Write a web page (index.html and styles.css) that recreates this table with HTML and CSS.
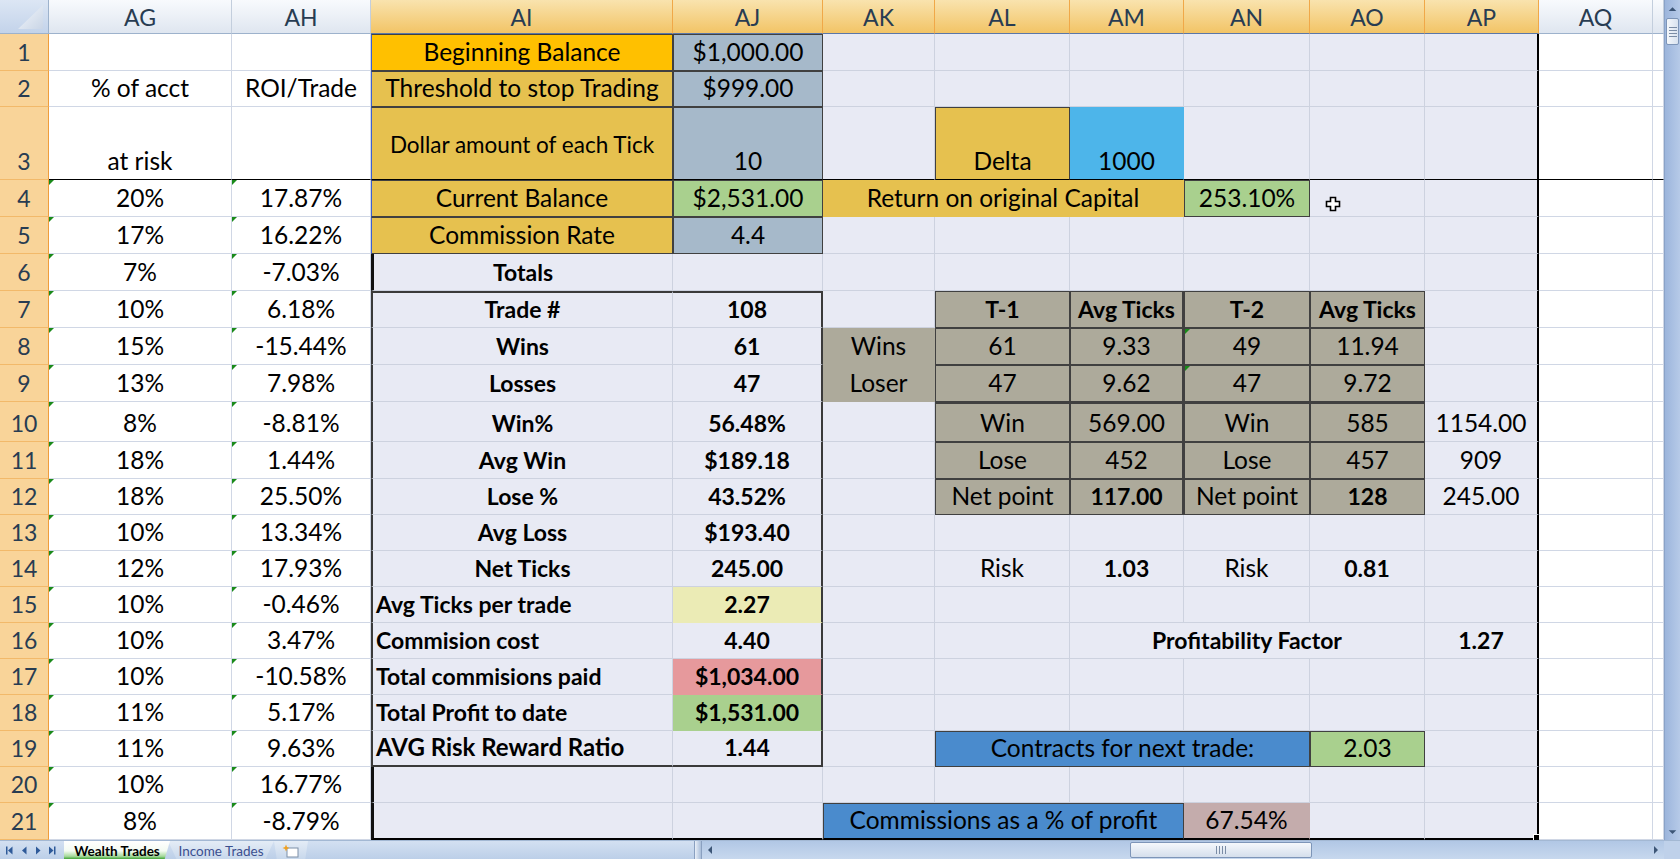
FILE: index.html
```html
<!DOCTYPE html>
<html lang="en">
<head>
<meta charset="utf-8">
<title>Wealth Trades</title>
<link rel="stylesheet" href="styles.css">
</head>
<body>
<div class="app">
  <div class="main">
    <div class="sheet">
      <!-- header row -->
      <div class="corner"><svg width="48" height="33" viewBox="0 0 48 33"><defs><linearGradient id="tg" x1="0" y1="0" x2="1" y2="1"><stop offset="0" stop-color="#f4f7fb"/><stop offset="1" stop-color="#c9d5e6"/></linearGradient></defs><polygon points="43,5 43,29 18,29" fill="url(#tg)"/></svg></div>
      <div class="h">AG</div>
      <div class="h">AH</div>
      <div class="h hs">AI</div>
      <div class="h hs">AJ</div>
      <div class="h hs">AK</div>
      <div class="h hs">AL</div>
      <div class="h hs">AM</div>
      <div class="h hs">AN</div>
      <div class="h hs">AO</div>
      <div class="h hs">AP</div>
      <div class="h">AQ</div>
      <div class="h"></div>

      <!-- row 1 -->
      <div class="rh">1</div>
      <div class="c"></div>
      <div class="c"></div>
      <div class="c s gold1 bx bl">Beginning Balance</div>
      <div class="c s bgy bx">$1,000.00</div>
      <div class="c s"></div>
      <div class="c s"></div>
      <div class="c s"></div>
      <div class="c s"></div>
      <div class="c s"></div>
      <div class="c s ap"></div>
      <div class="c"></div>
      <div class="c"></div>

      <!-- row 2 -->
      <div class="rh">2</div>
      <div class="c">% of acct</div>
      <div class="c">ROI/Trade</div>
      <div class="c s gold bx bl">Threshold to stop Trading</div>
      <div class="c s bgy bx">$999.00</div>
      <div class="c s"></div>
      <div class="c s"></div>
      <div class="c s"></div>
      <div class="c s"></div>
      <div class="c s"></div>
      <div class="c s ap"></div>
      <div class="c"></div>
      <div class="c"></div>

      <!-- row 3 -->
      <div class="rh">3</div>
      <div class="c fz">at risk</div>
      <div class="c fz"></div>
      <div class="c s gold bx bl fz mid">Dollar amount of each Tick</div>
      <div class="c s bgy bx fz">10</div>
      <div class="c s fz"></div>
      <div class="c s gold bx fz">Delta</div>
      <div class="c s sky fz">1000</div>
      <div class="c s fz"></div>
      <div class="c s fz"></div>
      <div class="c s ap fz"></div>
      <div class="c fz"></div>
      <div class="c fz"></div>

      <!-- row 4 -->
      <div class="rh">4</div>
      <div class="c err">20%</div>
      <div class="c err">17.87%</div>
      <div class="c s gold bx bl">Current Balance</div>
      <div class="c s grn bx">$2,531.00</div>
      <div class="c s gold sp3">Return on original Capital</div>
      <div class="c s grn bx">253.10%</div>
      <div class="c s cur"><svg width="16" height="16" viewBox="0 0 16 16"><path d="M5.5 1.5h5v4h4v5h-4v4h-5v-4h-4v-5h4z" fill="#fff" stroke="#000" stroke-width="1.6" stroke-linejoin="miter"/></svg></div>
      <div class="c s ap"></div>
      <div class="c"></div>
      <div class="c"></div>

      <!-- row 5 -->
      <div class="rh">5</div>
      <div class="c err">17%</div>
      <div class="c err">16.22%</div>
      <div class="c s gold bx bl">Commission Rate</div>
      <div class="c s bgy bx">4.4</div>
      <div class="c s"></div>
      <div class="c s"></div>
      <div class="c s"></div>
      <div class="c s"></div>
      <div class="c s"></div>
      <div class="c s ap"></div>
      <div class="c"></div>
      <div class="c"></div>

      <!-- row 6 -->
      <div class="rh">6</div>
      <div class="c err">7%</div>
      <div class="c err">-7.03%</div>
      <div class="c s b thk">Totals</div>
      <div class="c s"></div>
      <div class="c s"></div>
      <div class="c s"></div>
      <div class="c s"></div>
      <div class="c s"></div>
      <div class="c s"></div>
      <div class="c s ap"></div>
      <div class="c"></div>
      <div class="c"></div>

      <!-- row 7 -->
      <div class="rh">7</div>
      <div class="c err">10%</div>
      <div class="c err">6.18%</div>
      <div class="c s b tl tt">Trade #</div>
      <div class="c s b tr tt">108</div>
      <div class="c s"></div>
      <div class="c s tan bx b">T-1</div>
      <div class="c s tan bx b gr">Avg Ticks</div>
      <div class="c s tan bx b">T-2</div>
      <div class="c s tan bx b">Avg Ticks</div>
      <div class="c s ap"></div>
      <div class="c"></div>
      <div class="c"></div>

      <!-- row 8 -->
      <div class="rh">8</div>
      <div class="c err">15%</div>
      <div class="c err">-15.44%</div>
      <div class="c s b tl">Wins</div>
      <div class="c s b tr">61</div>
      <div class="c s tan">Wins</div>
      <div class="c s tan bx">61</div>
      <div class="c s tan bx gr">9.33</div>
      <div class="c s tan bx err">49</div>
      <div class="c s tan bx">11.94</div>
      <div class="c s ap"></div>
      <div class="c"></div>
      <div class="c"></div>

      <!-- row 9 -->
      <div class="rh">9</div>
      <div class="c err">13%</div>
      <div class="c err">7.98%</div>
      <div class="c s b tl">Losses</div>
      <div class="c s b tr">47</div>
      <div class="c s tan">Loser</div>
      <div class="c s tan bx">47</div>
      <div class="c s tan bx gr">9.62</div>
      <div class="c s tan bx err">47</div>
      <div class="c s tan bx">9.72</div>
      <div class="c s ap"></div>
      <div class="c"></div>
      <div class="c"></div>

      <!-- row 10 -->
      <div class="rh">10</div>
      <div class="c err">8%</div>
      <div class="c err">-8.81%</div>
      <div class="c s b tl">Win%</div>
      <div class="c s b tr">56.48%</div>
      <div class="c s"></div>
      <div class="c s tan bx gt">Win</div>
      <div class="c s tan bx gt gr">569.00</div>
      <div class="c s tan bx gt">Win</div>
      <div class="c s tan bx gt">585</div>
      <div class="c s ap">1154.00</div>
      <div class="c"></div>
      <div class="c"></div>

      <!-- row 11 -->
      <div class="rh">11</div>
      <div class="c err">18%</div>
      <div class="c err">1.44%</div>
      <div class="c s b tl">Avg Win</div>
      <div class="c s b tr">$189.18</div>
      <div class="c s"></div>
      <div class="c s tan bx">Lose</div>
      <div class="c s tan bx gr">452</div>
      <div class="c s tan bx">Lose</div>
      <div class="c s tan bx">457</div>
      <div class="c s ap">909</div>
      <div class="c"></div>
      <div class="c"></div>

      <!-- row 12 -->
      <div class="rh">12</div>
      <div class="c err">18%</div>
      <div class="c err">25.50%</div>
      <div class="c s b tl">Lose %</div>
      <div class="c s b tr">43.52%</div>
      <div class="c s"></div>
      <div class="c s tan bx">Net point</div>
      <div class="c s tan bx gr b">117.00</div>
      <div class="c s tan bx">Net point</div>
      <div class="c s tan bx b">128</div>
      <div class="c s ap">245.00</div>
      <div class="c"></div>
      <div class="c"></div>

      <!-- row 13 -->
      <div class="rh">13</div>
      <div class="c err">10%</div>
      <div class="c err">13.34%</div>
      <div class="c s b tl">Avg Loss</div>
      <div class="c s b tr">$193.40</div>
      <div class="c s"></div>
      <div class="c s"></div>
      <div class="c s"></div>
      <div class="c s"></div>
      <div class="c s"></div>
      <div class="c s ap"></div>
      <div class="c"></div>
      <div class="c"></div>

      <!-- row 14 -->
      <div class="rh">14</div>
      <div class="c err">12%</div>
      <div class="c err">17.93%</div>
      <div class="c s b tl">Net Ticks</div>
      <div class="c s b tr">245.00</div>
      <div class="c s"></div>
      <div class="c s">Risk</div>
      <div class="c s b">1.03</div>
      <div class="c s">Risk</div>
      <div class="c s b">0.81</div>
      <div class="c s ap"></div>
      <div class="c"></div>
      <div class="c"></div>

      <!-- row 15 -->
      <div class="rh">15</div>
      <div class="c err">10%</div>
      <div class="c err">-0.46%</div>
      <div class="c s b l tl">Avg Ticks per trade</div>
      <div class="c s yel b tr">2.27</div>
      <div class="c s"></div>
      <div class="c s"></div>
      <div class="c s"></div>
      <div class="c s"></div>
      <div class="c s"></div>
      <div class="c s ap"></div>
      <div class="c"></div>
      <div class="c"></div>

      <!-- row 16 -->
      <div class="rh">16</div>
      <div class="c err">10%</div>
      <div class="c err">3.47%</div>
      <div class="c s b l tl">Commision cost</div>
      <div class="c s b tr">4.40</div>
      <div class="c s"></div>
      <div class="c s"></div>
      <div class="c s b sp3">Profitability Factor</div>
      <div class="c s b ap">1.27</div>
      <div class="c"></div>
      <div class="c"></div>

      <!-- row 17 -->
      <div class="rh">17</div>
      <div class="c err">10%</div>
      <div class="c err">-10.58%</div>
      <div class="c s b l tl">Total commisions paid</div>
      <div class="c s pink b tr">$1,034.00</div>
      <div class="c s"></div>
      <div class="c s"></div>
      <div class="c s"></div>
      <div class="c s"></div>
      <div class="c s"></div>
      <div class="c s ap"></div>
      <div class="c"></div>
      <div class="c"></div>

      <!-- row 18 -->
      <div class="rh">18</div>
      <div class="c err">11%</div>
      <div class="c err">5.17%</div>
      <div class="c s b l tl">Total Profit to date</div>
      <div class="c s grn b tr">$1,531.00</div>
      <div class="c s"></div>
      <div class="c s"></div>
      <div class="c s"></div>
      <div class="c s"></div>
      <div class="c s"></div>
      <div class="c s ap"></div>
      <div class="c"></div>
      <div class="c"></div>

      <!-- row 19 -->
      <div class="rh">19</div>
      <div class="c err">11%</div>
      <div class="c err">9.63%</div>
      <div class="c s b l tl tb big">AVG Risk Reward Ratio</div>
      <div class="c s b tr tb">1.44</div>
      <div class="c s"></div>
      <div class="c s blue bx sp3">Contracts for next trade:</div>
      <div class="c s grn bx">2.03</div>
      <div class="c s ap"></div>
      <div class="c"></div>
      <div class="c"></div>

      <!-- row 20 -->
      <div class="rh">20</div>
      <div class="c err">10%</div>
      <div class="c err">16.77%</div>
      <div class="c s thk"></div>
      <div class="c s"></div>
      <div class="c s"></div>
      <div class="c s"></div>
      <div class="c s"></div>
      <div class="c s"></div>
      <div class="c s"></div>
      <div class="c s ap"></div>
      <div class="c"></div>
      <div class="c"></div>

      <!-- row 21 -->
      <div class="rh">21</div>
      <div class="c err">8%</div>
      <div class="c err">-8.79%</div>
      <div class="c s thk last"></div>
      <div class="c s last"></div>
      <div class="c s blue bx sp3 last">Commissions as a % of profit</div>
      <div class="c s rose last">67.54%</div>
      <div class="c s last"></div>
      <div class="c s ap last handle"></div>
      <div class="c"></div>
      <div class="c"></div>
    </div>

    <div class="vscroll">
      <div class="varrow"><svg width="16" height="16" viewBox="0 0 16 16"><path d="M4 10l4-4 4 4z" fill="#3d5677"/></svg></div>
      <div class="vthumb"><span></span><span></span><span></span><span></span></div>
      <div class="vtrack"></div>
      <div class="varrow"><svg width="16" height="16" viewBox="0 0 16 16"><path d="M4 6l4 4 4-4z" fill="#3d5677"/></svg></div>
    </div>
  </div>

  <div class="tabbar">
    <div class="nav">
      <svg width="60" height="19" viewBox="0 0 60 19">
        <rect x="6" y="5.5" width="1.5" height="8" fill="#2e5a99"/>
        <path d="M12.5 5.5v8l-4.5-4z" fill="#2e5a99"/>
        <path d="M26.5 5.5v8l-4.5-4z" fill="#2e5a99"/>
        <path d="M36 5.5v8l4.5-4z" fill="#2e5a99"/>
        <path d="M49 5.5v8l4.5-4z" fill="#2e5a99"/>
        <rect x="54" y="5.5" width="1.5" height="8" fill="#2e5a99"/>
      </svg>
    </div>
    <div class="tab active">Wealth Trades</div>
    <div class="tab">Income Trades</div>
    <div class="tab newtab"><svg width="18" height="14" viewBox="0 0 18 14"><rect x="5" y="4" width="11" height="9" fill="#fff" stroke="#7d8fa8"/><path d="M4 0.5l1 2.5 2.5 1-2.5 1-1 2.5-1-2.5-2.5-1 2.5-1z" fill="#f0a020"/></svg></div>
    <div class="tabfill"></div>
    <div class="split"></div>
    <div class="hscroll">
      <div class="harrow"><svg width="16" height="16" viewBox="0 0 16 16"><path d="M10 4l-4 4 4 4z" fill="#3d5677"/></svg></div>
      <div class="htrack"><div class="hthumb"><span></span><span></span><span></span><span></span></div></div>
      <div class="harrow"><svg width="16" height="16" viewBox="0 0 16 16"><path d="M6 4l4 4-4 4z" fill="#3d5677"/></svg></div>
    </div>
    <div class="sizebox"></div>
  </div>
</div>
</body>
</html>
```

FILE: styles.css
```css
* { box-sizing: border-box; }
html, body { margin: 0; padding: 0; }
body {
  width: 1680px;
  height: 859px;
  overflow: hidden;
  background: #fff;
  font-family: Lato, "Liberation Sans", sans-serif;
}

.app { display: flex; flex-direction: column; width: 1680px; height: 859px; }
.main { display: flex; height: 840px; }

.sheet {
  display: grid;
  width: 1664px;
  height: 840px;
  overflow: hidden;
  grid-template-columns: 49px 183px 139px 302px 150px 112px 135px 114px 126px 115px 114px 114px 11px;
  grid-template-rows: 34px 37px 36px 73px repeat(6, 37px) 40px 37px repeat(9, 36px) 37px;
}

/* headers */
.corner {
  background: linear-gradient(#dce6f4, #c3d3ea);
  border-right: 1px solid #9db2cc;
  border-bottom: 1px solid #9db2cc;
}
.corner svg { display: block; }

.h {
  display: flex;
  align-items: flex-end;
  justify-content: center;
  padding-bottom: 2px;
  font-size: 23px;
  line-height: 27px;
  color: #283c52;
  background: linear-gradient(#f8fafd, #dfe6f0);
  border-right: 1px solid #c3cedd;
  border-bottom: 1px solid #9db2cc;
}
.hs {
  background: linear-gradient(#f9e3ae, #f2c466);
  border-right-color: #f0a848;
  border-bottom-color: #5a77a8;
}

.rh {
  display: flex;
  align-items: flex-end;
  justify-content: center;
  padding-bottom: 4px;
  font-size: 23px;
  line-height: 27px;
  color: #283c52;
  background: #f9d499;
  border-right: 1px solid #ef9d3c;
  border-bottom: 1px solid #f2b96a;
}

/* cells */
.c {
  position: relative;
  display: flex;
  align-items: flex-end;
  justify-content: center;
  padding: 0 2px 4px;
  font-size: 24.5px;
  line-height: 28px;
  color: #000;
  white-space: nowrap;
  background: #fff;
  border-right: 1px solid #d0d7e5;
  border-bottom: 1px solid #d0d7e5;
}
.s { background: #e8eaf4; border-color: #cdd2df; }

.b { font-weight: 700; font-size: 23px; }
.l { justify-content: flex-start; padding-left: 3px; }
.mid { align-items: center; padding-bottom: 0; padding-top: 3px; font-size: 22.5px; }
.sp3 { grid-column: span 3; }
.big { font-size: 24px; }

/* fills */
.gold1 { background: #ffc000; }
.gold { background: #e6c14f; border-color: #e6c14f; }
.bgy { background: #a6b9ca; }
.grn { background: #a9d08e; border-color: #a9d08e; }
.sky { background: #4db5ea; border-color: #4db5ea; }
.tan { background: #adaa9b; border-color: #adaa9b; }
.yel { background: #ebebb5; border-color: #ebebb5; }
.pink { background: #e6999c; border-color: #e6999c; }
.blue { background: #4a8bcd; border-color: #4a8bcd; }
.rose { background: #c4acac; border-color: #c4acac; }

/* borders */
.bx { border: 1px solid #404040; }
.gr { border-right: 2px solid #404040; }
.gt { border-top: 2px solid #404040; }
.tl { border-left: 2px solid #3a3a3a; }
.tr { border-right: 2px solid #3a3a3a; }
.tt { border-top: 2px solid #3a3a3a; }
.tb { border-bottom: 2px solid #3a3a3a; }
.bl { border-left: 1px solid #3c5fd0; }
.thk { border-left: 3px solid #111; }
.ap { border-right: 2px solid #000; }
.fz { border-bottom: 1px solid #000; }
.last { border-bottom: 2px solid #000; }

.err::before {
  content: "";
  position: absolute;
  top: 0;
  left: 0;
  border-top: 5px solid #1a8a1a;
  border-right: 5px solid transparent;
}

.handle::after {
  content: "";
  position: absolute;
  right: -4px;
  bottom: -4px;
  width: 6px;
  height: 6px;
  background: #000;
  border: 1px solid #fff;
}

.cur { justify-content: flex-start; padding-left: 15px; padding-bottom: 4px; }
.cur svg { display: block; }

/* vertical scrollbar */
.vscroll {
  width: 16px;
  height: 840px;
  display: flex;
  flex-direction: column;
  background: linear-gradient(to right, #9cb5dc, #b6cae8);
  border-left: 1px solid #8aa3c8;
}
.varrow { height: 17px; display: flex; align-items: center; justify-content: center; }
.varrow svg { display: block; }
.vthumb {
  height: 27px;
  margin: 1px 1px 0;
  border: 1px solid #7d95b8;
  border-radius: 2px;
  background: linear-gradient(to right, #f4f7fb, #d8e2ef);
  display: flex;
  flex-direction: column;
  justify-content: center;
  align-items: center;
  gap: 2px;
}
.vthumb span { display: block; width: 8px; height: 1px; background: #7a8ca5; }
.vtrack { flex: 1; }

/* tab bar */
.tabbar {
  height: 19px;
  display: flex;
  align-items: stretch;
  background: linear-gradient(#d3e0f1, #bccfe8);
  border-top: 1px solid #a3b8d3;
  font-family: Lato, "Liberation Sans", sans-serif;
}
.nav { width: 64px; display: flex; align-items: center; }
.nav svg { display: block; }
.tab {
  display: flex;
  align-items: center;
  justify-content: center;
  width: 106px;
  font-size: 13.5px;
  color: #3b4f8f;
  background: linear-gradient(#e4ecf6, #c8d8ec);
  clip-path: polygon(0 0, 100% 0, 92% 100%, 8% 100%);
  margin-right: -2px;
  padding-top: 1px;
}
.tab.active {
  color: #000;
  font-weight: 700;
  background: linear-gradient(#ffffff 0%, #f4fbf2 55%, #a6d99c 85%, #3fa436 100%);
  clip-path: polygon(0 0, 100% 0, 95% 100%, 0 100%);
  position: relative;
  z-index: 1;
}
.newtab { width: 34px; margin-left: 2px; }
.newtab svg { display: block; }
.tabfill { flex: 1; }
.split {
  width: 8px;
  background: linear-gradient(to right, #e9eff8, #a8bdd9);
  border-left: 1px solid #8aa0c0;
  border-right: 1px solid #8aa0c0;
}
.hscroll {
  width: 962px;
  display: flex;
  background: linear-gradient(#b1c7e5, #c7d8ee);
}
.harrow { width: 16px; display: flex; align-items: center; justify-content: center; }
.harrow svg { display: block; }
.htrack { flex: 1; display: flex; padding-left: 412px; }
.hthumb {
  width: 182px;
  margin: 1px 0;
  border: 1px solid #7d95b8;
  border-radius: 2px;
  background: linear-gradient(#f5f8fc, #d5dfec);
  display: flex;
  align-items: center;
  justify-content: center;
  gap: 2px;
}
.hthumb span { display: block; width: 1px; height: 8px; background: #7a8ca5; }
.sizebox { width: 16px; background: #bfd1ea; }
```
